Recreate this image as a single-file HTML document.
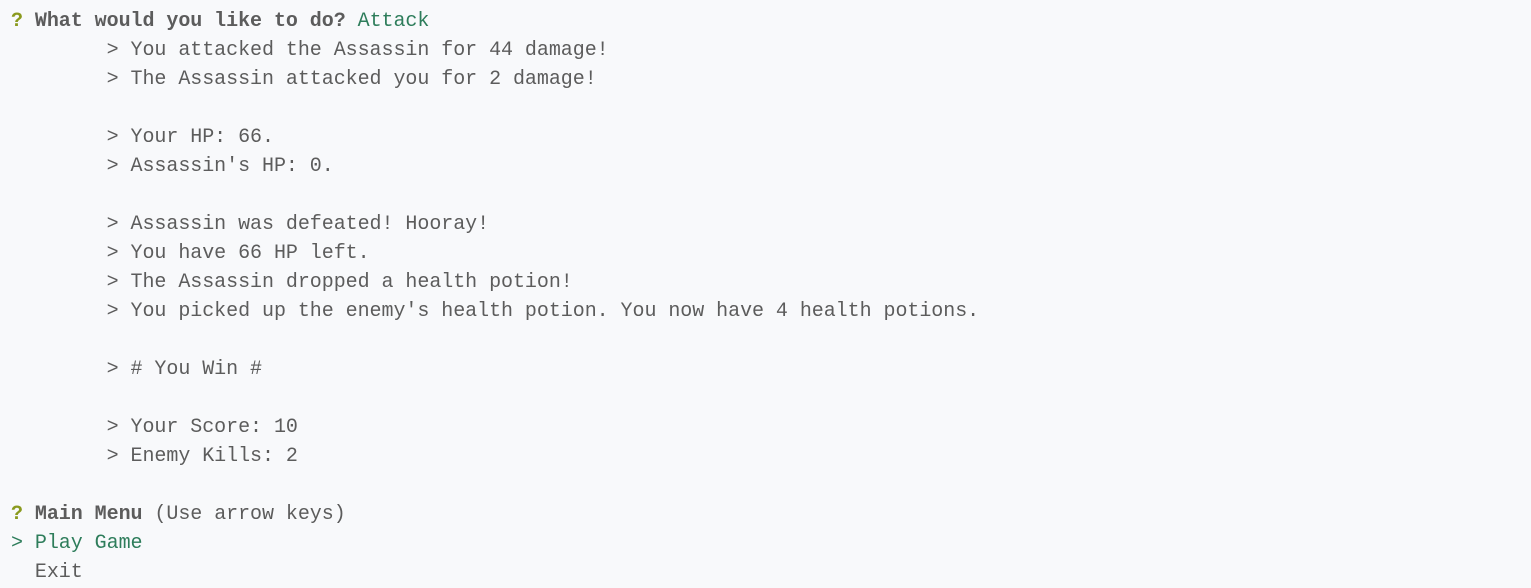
<!DOCTYPE html>
<html><head><meta charset="utf-8"><style>
html,body{margin:0;padding:0;background:#f8f9fb;width:1531px;height:588px;overflow:hidden}
pre{margin:0;padding:7px 0 0 11px;font-family:"Liberation Mono",monospace;font-size:20px;line-height:29px;color:#5c5c5c;letter-spacing:-0.05px}
.q{color:#8a9a1e;font-weight:bold}.b{font-weight:bold}.g{color:#2e7d5b}
</style></head><body><pre><span class="q">?</span> <span class="b">What would you like to do?</span> <span class="g">Attack</span>
        &gt; You attacked the Assassin for 44 damage!
        &gt; The Assassin attacked you for 2 damage!

        &gt; Your HP: 66.
        &gt; Assassin's HP: 0.

        &gt; Assassin was defeated! Hooray!
        &gt; You have 66 HP left.
        &gt; The Assassin dropped a health potion!
        &gt; You picked up the enemy's health potion. You now have 4 health potions.

        &gt; # You Win #

        &gt; Your Score: 10
        &gt; Enemy Kills: 2

<span class="q">?</span> <span class="b">Main Menu</span> (Use arrow keys)
<span class="g">&gt; Play Game</span>
  Exit
</pre></body></html>
